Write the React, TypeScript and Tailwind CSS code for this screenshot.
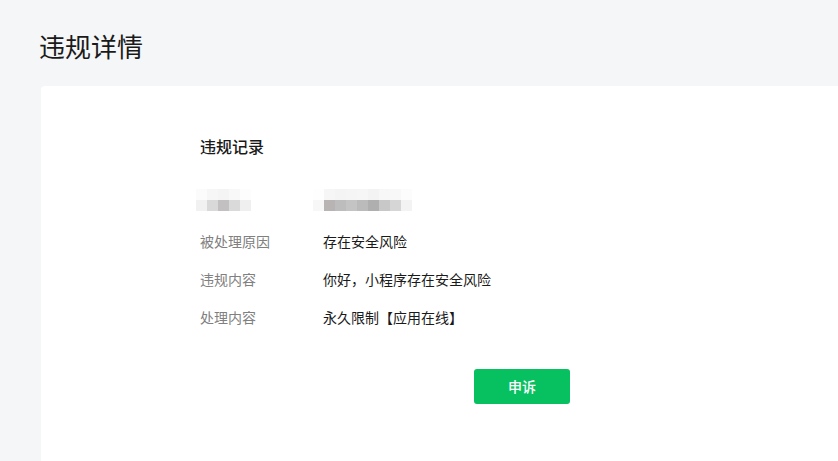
import React from "react";

const leftTop = ["#fbfbfb", "#f6f6f6", "#f4f4f4", "#f8f8f8", "#fdfdfd"];
const leftBot = ["#f1f1f1", "#d9d9d9", "#c2c0c0", "#dadada", "#efefef"];
const rightTop = ["#fefefe", "#f6f6f6", "#f4f4f4", "#f5f5f5", "#f6f6f6", "#f3f3f3", "#f7f7f7", "#f8f8f8", "#fcfcfc"];
const rightBot = ["#f7f7f7", "#b9b4b4", "#bdbdbd", "#c4c4c4", "#bbbbbb", "#afafaf", "#c8c8c8", "#d6d6d6", "#f3f3f3"];

function Blur({ top, bot }: { top: string[]; bot: string[] }) {
  return (
    <div className="flex flex-col">
      <div className="flex">
        {top.map((c, i) => (
          <div key={i} className="w-[11px] h-[11px]" style={{ background: c }} />
        ))}
      </div>
      <div className="flex">
        {bot.map((c, i) => (
          <div key={i} className="w-[11px] h-[11px]" style={{ background: c }} />
        ))}
      </div>
    </div>
  );
}

const rows = [
  ["被处理原因", "存在安全风险"],
  ["违规内容", "你好，小程序存在安全风险"],
  ["处理内容", "永久限制【应用在线】"],
];

export default function App() {
  return (
    <div
      className="w-[838px] h-[461px] overflow-hidden bg-[#f5f6f7] pl-[41px] pt-[27px]"
      style={{ fontFamily: '"Noto Sans CJK SC", "Noto Sans", sans-serif' }}
    >
      <h1 className="text-[26px] leading-[38px] text-[#1a1a1a] font-normal -ml-[2px]">违规详情</h1>
      <div className="mt-[21px] bg-white rounded-tl-[4px] h-[400px] pl-[159px] pt-[49px]">
        <div className="text-[16px] leading-[22px] font-medium text-[#1a1a1a]">违规记录</div>
        <div className="flex mt-[32px] h-[22px]">
          <div className="w-[117px] -ml-[4px]">
            <Blur top={leftTop} bot={leftBot} />
          </div>
          <div>
            <Blur top={rightTop} bot={rightBot} />
          </div>
        </div>
        <div className="mt-[19px] flex flex-col gap-[16px]">
          {rows.map(([k, v]) => (
            <div key={k} className="flex text-[14px] leading-[22px]">
              <div className="w-[123px] text-[#808080]">{k}</div>
              <div className="text-[#1a1a1a]">{v}</div>
            </div>
          ))}
        </div>
        <div className="mt-[41px] ml-[274px]">
          <button className="w-[96px] h-[35px] rounded-[3px] bg-[#07c160] text-white text-[14px] font-medium">
            申诉
          </button>
        </div>
      </div>
    </div>
  );
}
